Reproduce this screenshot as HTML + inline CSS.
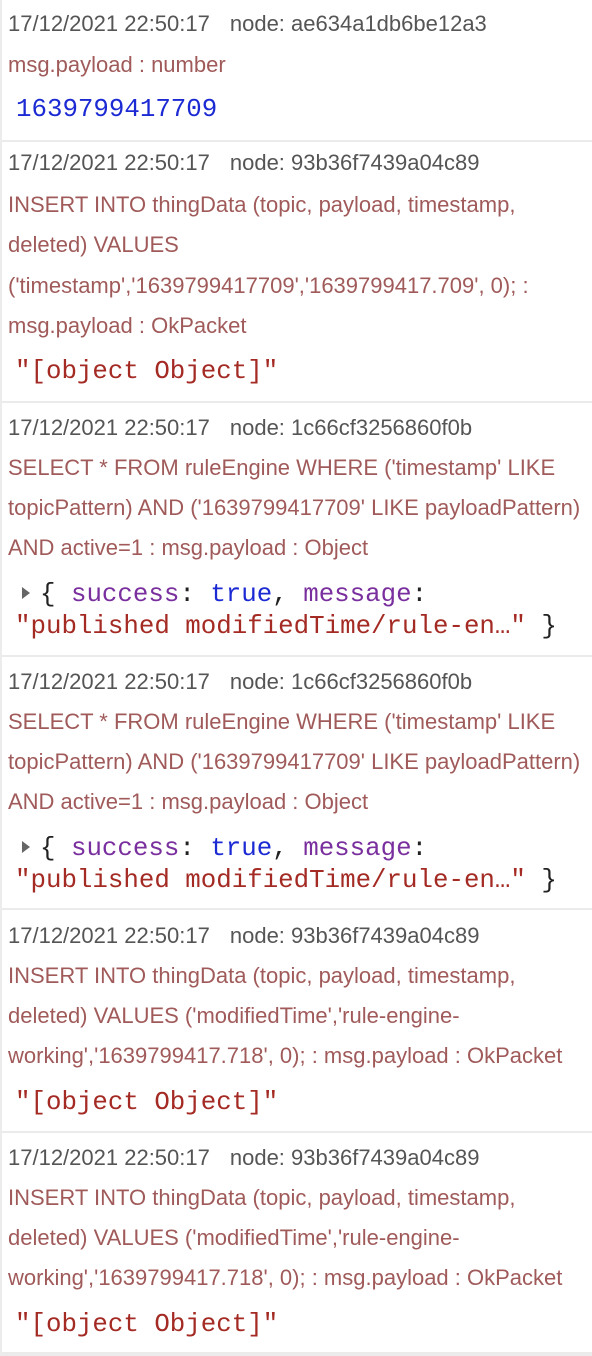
<!DOCTYPE html>
<html><head><meta charset="utf-8"><style>
html,body{margin:0;padding:0;background:#fff;}
body{width:592px;height:1356px;position:relative;overflow:hidden;border-left:2px solid #ececec;box-sizing:border-box;}
.sep{position:absolute;left:0;width:592px;height:2px;background:#ebebeb;}
.l{position:absolute;left:6px;white-space:nowrap;height:28px;line-height:28px;font-family:"Liberation Sans",sans-serif;font-size:22px;}
.h{color:#555;}
.h span{margin-left:20px;}
.m{color:#a05a5a;}
.v{position:absolute;left:13px;white-space:nowrap;height:32px;line-height:32px;font-family:"Liberation Mono",monospace;font-size:25.8px;}
.num{color:#1c2ad4;}
.str{color:#a42a24;}
.key{color:#7a2f9e;}
.pun{color:#222;}
.tri{display:inline-block;width:0;height:0;border-top:6px solid transparent;border-bottom:6px solid transparent;border-left:8px solid #666;margin:0 10px 0 14px;vertical-align:2px;}
</style></head><body>

<div class="l h" style="top:10px">17/12/2021 22:50:17<span>node: ae634a1db6be12a3</span></div>
<div class="l m" style="top:51px">msg.payload : number</div>
<div class="v num" style="top:94px;left:14px">1639799417709</div>
<div class="sep" style="top:140px"></div>

<div class="l h" style="top:149px">17/12/2021 22:50:17<span>node: 93b36f7439a04c89</span></div>
<div class="l m" style="top:191px">INSERT INTO thingData (topic, payload, timestamp,</div>
<div class="l m" style="top:231px">deleted) VALUES</div>
<div class="l m" style="top:272px">('timestamp','1639799417709','1639799417.709', 0); :</div>
<div class="l m" style="top:312px">msg.payload : OkPacket</div>
<div class="v str" style="top:356px">"[object Object]"</div>
<div class="sep" style="top:401px"></div>

<div class="l h" style="top:414px">17/12/2021 22:50:17<span>node: 1c66cf3256860f0b</span></div>
<div class="l m" style="top:454px">SELECT * FROM ruleEngine WHERE ('timestamp' LIKE</div>
<div class="l m" style="top:494px">topicPattern) AND ('1639799417709' LIKE payloadPattern)</div>
<div class="l m" style="top:534px">AND active=1 : msg.payload : Object</div>
<div class="v" style="top:579px;left:6px"><span class="tri"></span><span class="pun">{ </span><span class="key">success</span><span class="pun">: </span><span class="num">true</span><span class="pun">, </span><span class="key">message</span><span class="pun">:</span></div>
<div class="v" style="top:611px"><span class="str">"published modifiedTime/rule-en…"</span><span class="pun"> }</span></div>
<div class="sep" style="top:655px"></div>

<div class="l h" style="top:668px">17/12/2021 22:50:17<span>node: 1c66cf3256860f0b</span></div>
<div class="l m" style="top:708px">SELECT * FROM ruleEngine WHERE ('timestamp' LIKE</div>
<div class="l m" style="top:748px">topicPattern) AND ('1639799417709' LIKE payloadPattern)</div>
<div class="l m" style="top:788px">AND active=1 : msg.payload : Object</div>
<div class="v" style="top:833px;left:6px"><span class="tri"></span><span class="pun">{ </span><span class="key">success</span><span class="pun">: </span><span class="num">true</span><span class="pun">, </span><span class="key">message</span><span class="pun">:</span></div>
<div class="v" style="top:865px"><span class="str">"published modifiedTime/rule-en…"</span><span class="pun"> }</span></div>
<div class="sep" style="top:908px"></div>

<div class="l h" style="top:922px">17/12/2021 22:50:17<span>node: 93b36f7439a04c89</span></div>
<div class="l m" style="top:962px">INSERT INTO thingData (topic, payload, timestamp,</div>
<div class="l m" style="top:1002px">deleted) VALUES ('modifiedTime','rule-engine-</div>
<div class="l m" style="top:1042px">working','1639799417.718', 0); : msg.payload : OkPacket</div>
<div class="v str" style="top:1087px">"[object Object]"</div>
<div class="sep" style="top:1131px"></div>

<div class="l h" style="top:1144px">17/12/2021 22:50:17<span>node: 93b36f7439a04c89</span></div>
<div class="l m" style="top:1184px">INSERT INTO thingData (topic, payload, timestamp,</div>
<div class="l m" style="top:1224px">deleted) VALUES ('modifiedTime','rule-engine-</div>
<div class="l m" style="top:1264px">working','1639799417.718', 0); : msg.payload : OkPacket</div>
<div class="v str" style="top:1309px">"[object Object]"</div>
<div class="sep" style="top:1352px;height:4px"></div>

</body></html>
